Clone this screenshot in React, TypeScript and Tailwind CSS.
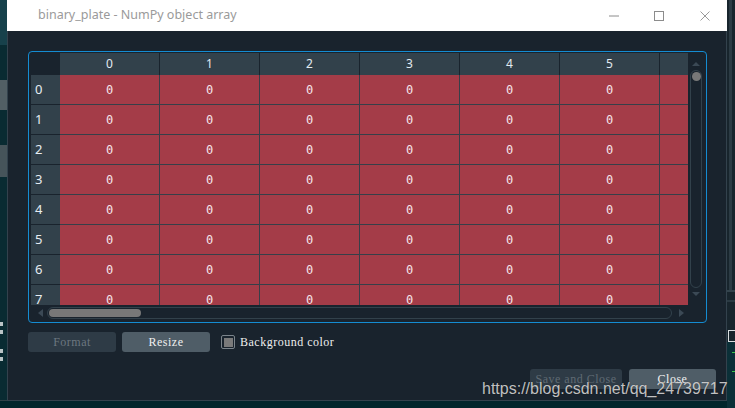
import React from 'react';

const COLS = [0, 1, 2, 3, 4, 5, 6];
const ROWS = [0, 1, 2, 3, 4, 5, 6, 7];

const TitleBar: React.FC = () => (
  <div className="h-[31px] shrink-0 bg-white flex items-center pl-[31px] pr-[17px]">
    <span className="text-[12.5px] leading-none text-[#9a9a9a] [font-family:'Noto_Sans',sans-serif]">
      binary_plate - NumPy object array
    </span>
    <div className="ml-auto flex items-center gap-[35px]">
      {/* minimize */}
      <svg width="10" height="10" viewBox="0 0 10 10">
        <line x1="0" y1="5" x2="10" y2="5" stroke="#8c8c8c" strokeWidth="1" />
      </svg>
      {/* maximize */}
      <svg width="10" height="10" viewBox="0 0 10 10">
        <rect x="0.5" y="0.5" width="9" height="9" fill="none" stroke="#8c8c8c" strokeWidth="1" />
      </svg>
      {/* close */}
      <svg width="10" height="10" viewBox="0 0 10 10" className="ml-[1px]">
        <path d="M0.5 0.5 L9.5 9.5 M9.5 0.5 L0.5 9.5" stroke="#9a9a9a" strokeWidth="1" />
      </svg>
    </div>
  </div>
);

const ArrayGrid: React.FC = () => (
  <div className="w-[657px] h-[252px] overflow-hidden shrink-0">
    <div className="flex h-[22px]">
      <div className="w-[29px] shrink-0 bg-[#19232d]" />
      {COLS.map((c) => (
        <div
          key={c}
          className="w-[100px] shrink-0 bg-[#32414b] border-r border-[#19232d] flex items-center justify-center text-[12px] text-[#e2ebf2] [font-family:'Noto_Sans',sans-serif]"
        >
          {c}
        </div>
      ))}
    </div>
    {ROWS.map((r) => (
      <div key={r} className="flex h-[30px]">
        <div className="w-[29px] shrink-0 bg-[#32414b] border-b border-[#19232d] flex items-center pl-[4px] text-[13px] text-[#e6edf2] [font-family:'Noto_Sans',sans-serif]">
          {r}
        </div>
        {COLS.map((c) => (
          <div
            key={c}
            className="w-[100px] shrink-0 bg-[#a43c48] border-r border-b border-[#363f49] flex items-center justify-center text-[12px] text-[#f4e3ea] [font-family:'DejaVu_Sans_Mono',monospace]"
          >
            0
          </div>
        ))}
      </div>
    ))}
  </div>
);

const VScroll: React.FC = () => (
  <div className="w-[16px] h-[252px] shrink-0 flex flex-col items-center pt-[9px] pb-[9px]">
    <svg width="8" height="4" viewBox="0 0 8 4">
      <polygon points="0,4 4,0 8,4" fill="#3b4955" />
    </svg>
    <div className="mt-[4px] w-[12px] flex-1 rounded-full border border-[#32414b] flex flex-col items-center pt-[1px]">
      <div className="w-[9px] h-[9px] rounded-full bg-[#787878]" />
    </div>
    <svg width="8" height="4" viewBox="0 0 8 4" className="mt-[4px]">
      <polygon points="0,0 8,0 4,4" fill="#3b4955" />
    </svg>
  </div>
);

const HScroll: React.FC = () => (
  <div className="h-[16px] w-[657px] flex items-center pl-[7px]">
    <svg width="5" height="8" viewBox="0 0 5 8">
      <polygon points="5,0 5,8 0,4" fill="#3b4955" />
    </svg>
    <div className="ml-[4px] w-[625px] h-[12px] rounded-full border border-[#32414b] flex items-center px-[1px]">
      <div className="w-[92px] h-[8px] rounded-full bg-[#787878]" />
    </div>
    <svg width="5" height="8" viewBox="0 0 5 8" className="ml-[7px]">
      <polygon points="0,0 0,8 5,4" fill="#3b4955" />
    </svg>
  </div>
);

// SimSun-like look for the Qt buttons
const btnText = "text-[12px] tracking-[0.5px] [font-family:'Liberation_Serif',serif]";

const LeftStrip: React.FC = () => (
  <div className="w-[7px] h-[408px] shrink-0 flex flex-col overflow-hidden bg-[#092b32]">
    <div className="h-[45px] bg-[#17414b]" />
    <div className="h-[35px]" />
    <div className="h-[30px] bg-[#525f65]" />
    <div className="h-[35px]" />
    <div className="h-[32px] bg-[#46545a]" />
    <div className="h-[145px]" />
    <div className="flex flex-col gap-[4px]">
      <div className="w-[3px] h-[4px] bg-[#b9c4c6]" />
      <div className="w-[3px] h-[4px] bg-[#b9c4c6]" />
    </div>
    <div className="h-[15px]" />
    <div className="flex flex-col gap-[4px]">
      <div className="w-[3px] h-[4px] bg-[#b9c4c6]" />
      <div className="w-[3px] h-[4px] bg-[#b9c4c6]" />
    </div>
    <div className="flex-1" />
    <div className="h-[1px] bg-[#2f4248]" />
    <div className="h-[7px] bg-[#01262c]" />
  </div>
);

const RightStrip: React.FC = () => (
  <div className="w-[8px] h-[408px] shrink-0 flex flex-col bg-[#18252d]">
    <div className="h-[290px] flex">
      <div className="w-[2px]" />
      <div className="w-[3px] bg-[#2c3b44]" />
    </div>
    <div className="h-[2px] bg-[#33434c]" />
    <div className="h-[8px]" />
    <div className="h-[2px] bg-[#2b3a43]" />
    <div className="h-[28px]" />
    <div className="h-[12px] border border-r-0 border-[#d8dde0] ml-[1px]" />
    <div className="flex-1 bg-[#0b3038] flex flex-col items-end pt-[10px] gap-[18px]">
      <div className="w-[3px] h-[1px] bg-[#39c24a]" />
      <div className="w-[3px] h-[1px] bg-[#39c24a]" />
    </div>
  </div>
);

const App: React.FC = () => {
  return (
    <div className="relative w-[735px] h-[408px] flex overflow-hidden bg-[#01262c]">
      <LeftStrip />

      <div className="w-[720px] h-[408px] shrink-0 flex flex-col">
        <div className="h-[401px] flex flex-col">
          <TitleBar />
          <div className="flex-1 bg-[#19232d] border-l border-r border-b border-[#33424d] pt-[20px]">
            {/* array table frame */}
            <div className="ml-[20px] w-[679px] h-[272px] border border-[#148cd2] rounded-[4px] px-[2px] py-[1px] flex flex-col">
              <div className="flex">
                <ArrayGrid />
                <VScroll />
              </div>
              <HScroll />
            </div>

            {/* format / resize / background */}
            <div className="mt-[9px] h-[20px] flex items-center pl-[20px]">
              <div className={`w-[88px] h-[20px] rounded-[3px] bg-[#2e3b46] text-[#6c7780] flex items-center justify-center ${btnText}`}>
                Format
              </div>
              <div className={`ml-[6px] w-[88px] h-[20px] rounded-[3px] bg-[#4f5d67] text-[#f0f0f0] flex items-center justify-center ${btnText}`}>
                Resize
              </div>
              <div className="ml-[11px] w-[14px] h-[14px] rounded-[2px] border border-[#7b848b] flex items-center justify-center">
                <div className="w-[9px] h-[9px] bg-[#7a7a7a]" />
              </div>
              <span className={`ml-[5px] text-[#eeeeee] ${btnText}`}>Background color</span>
            </div>

            {/* bottom buttons */}
            <div className="mt-[17px] h-[20px] flex items-center justify-end pr-[10px]">
              <div className={`w-[92px] h-[20px] rounded-[3px] bg-[#2e3b46] text-[#5f6a73] flex items-center justify-center ${btnText}`}>
                Save and Close
              </div>
              <div className={`ml-[7px] w-[87px] h-[20px] rounded-[3px] bg-[#4f5d67] text-[#f0f0f0] flex items-center justify-center ${btnText}`}>
                Close
              </div>
            </div>
          </div>
        </div>
        <div className="flex-1 bg-[#01262c]" />
      </div>

      <RightStrip />

      {/* csdn watermark */}
      <div className="absolute left-[482px] top-[381px] text-[16px] leading-[16px] text-[#e2e2e2]/85 [font-family:'Liberation_Sans',sans-serif] [text-shadow:0_0_1px_rgba(0,0,0,0.6)] whitespace-nowrap">
        https://blog.csdn.net/qq_24739717
      </div>
    </div>
  );
};

export default App;
